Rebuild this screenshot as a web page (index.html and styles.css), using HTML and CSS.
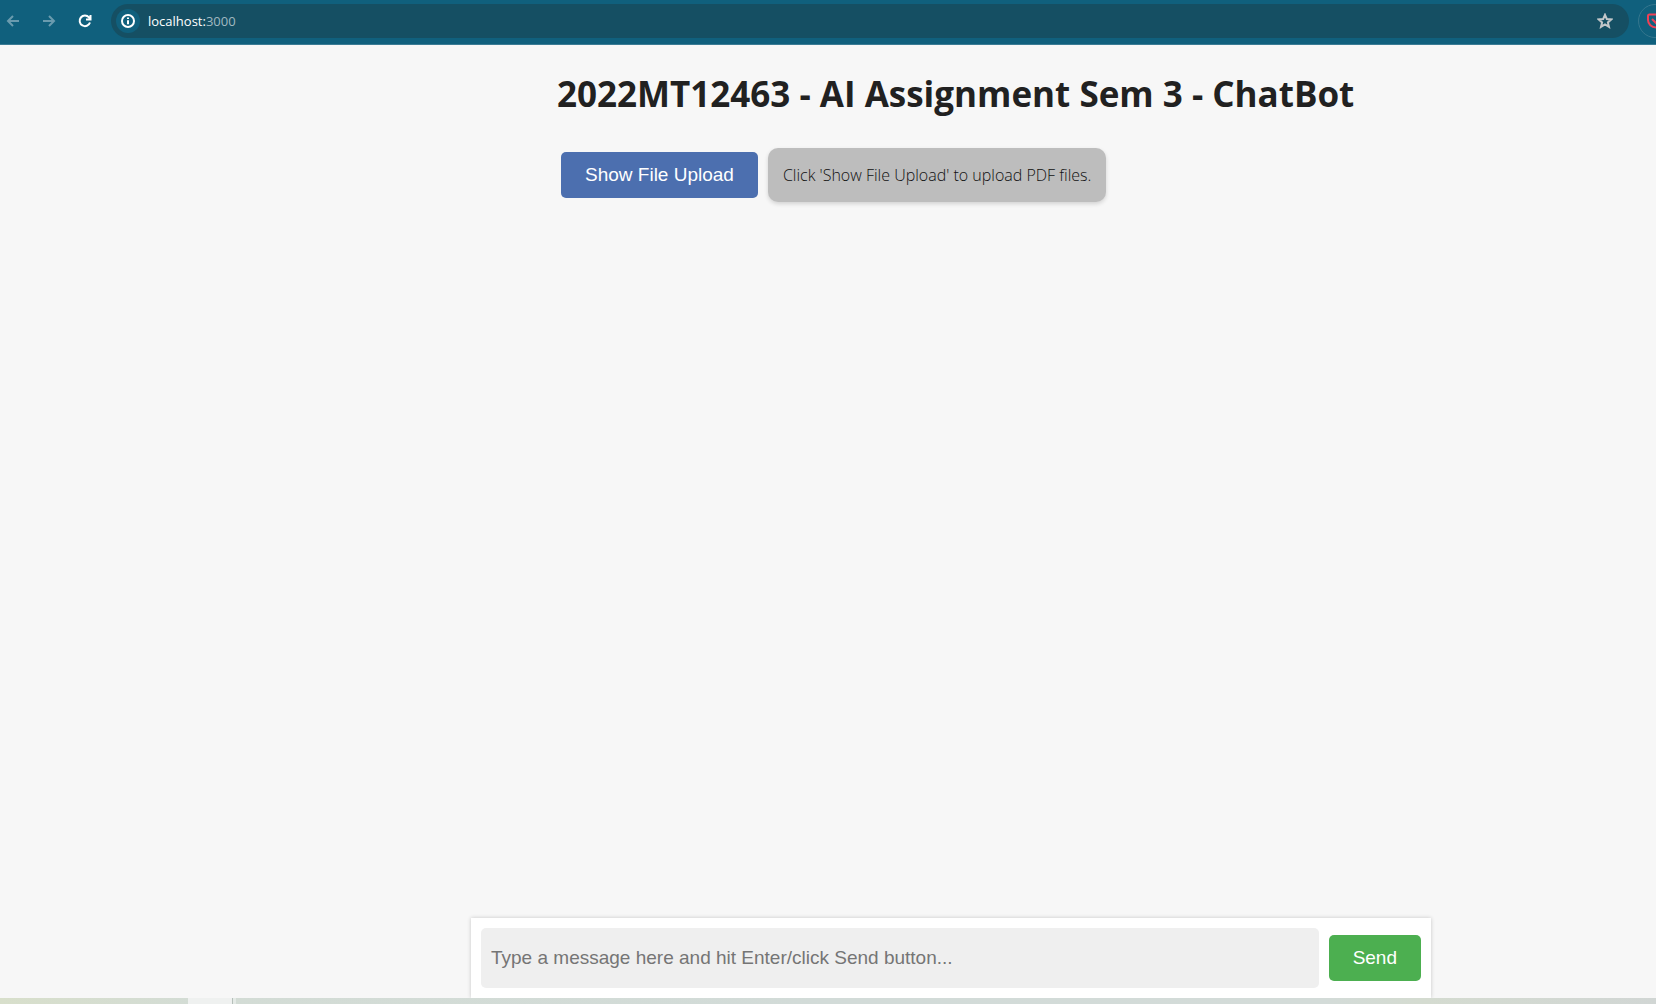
FILE: index.html
```html
<!DOCTYPE html>
<html lang="en">
<head>
<meta charset="utf-8">
<title>ChatBot</title>
<link rel="stylesheet" href="styles.css">
</head>
<body>
<header class="toolbar">
  <nav class="nav">
    <button class="nav-btn dim" aria-label="Back"><svg width="14" height="14" viewBox="0 0 14 14"><path d="M13 7H2M7 2L2 7l5 5"/></svg></button>
    <button class="nav-btn dim" aria-label="Forward"><svg width="14" height="14" viewBox="0 0 14 14"><path d="M1 7h11M7 2l5 5-5 5"/></svg></button>
    <button class="nav-btn reload" aria-label="Reload"><svg width="14" height="14" viewBox="0 0 14 14"><path d="M12 8.500A5.300 5.300 0 1 1 11 3.400L12.300 4.800M12.500 1v4.600H8"/></svg></button>
  </nav>
  <div class="address">
    <button class="site-info" aria-label="Site information"><svg width="14" height="14" viewBox="0 0 14 14"><circle cx="7" cy="7" r="6"/><path d="M7 6.200v4M7 3.500v1.600"/></svg></button>
    <div class="url">localhost:<span class="port">3000</span></div>
    <button class="star" aria-label="Bookmark"><svg width="16" height="16" viewBox="0 0 16 16"><path d="M8 1.800l1.800 4.200 4.600.4-3.500 3 1.100 4.500L8 11.500l-4 2.400 1.100-4.500-3.500-3 4.600-.4z"/></svg></button>
  </div>
  <button class="extension" aria-label="Save to Pocket"><svg width="18" height="16" viewBox="0 0 18 16"><path d="M2.500 1.500h13q1.500 0 1.500 1.500v4a8 7.500 0 0 1-16 0V3q0-1.500 1.500-1.500zM5 6l4 4 4-4"/></svg></button>
</header>
<div class="page">
  <main class="content">
    <h1 class="title">2022MT12463 - AI Assignment Sem 3 - ChatBot</h1>
    <div class="upload">
      <button class="btn btn-upload">Show File Upload</button>
      <p class="hint">Click 'Show File Upload' to upload PDF files.</p>
    </div>
  </main>
  <form class="composer">
    <input class="message" type="text" aria-label="Message" placeholder="Type a message here and hit Enter/click Send button...">
    <button class="btn btn-send" type="button">Send</button>
  </form>
</div>
<footer class="taskbar"><div class="task"></div><div class="divider"></div></footer>
</body>
</html>
```

FILE: styles.css
```css
* { box-sizing: border-box; }
body {
  margin: 0;
  min-height: 100vh;
  display: flex;
  flex-direction: column;
  overflow-x: hidden;
  background: #f7f7f7;
  color: #212121;
  font-family: "Open Sans", "Noto Sans", sans-serif;
}
button { border: 0; padding: 0; background: none; font: inherit; flex: none; }
svg { display: block; fill: none; stroke: currentColor; stroke-width: 2; }

.toolbar {
  display: flex;
  align-items: center;
  gap: 9px;
  height: 45px;
  padding: 0 0 3px 6px;
  background: #10607d;
  border-bottom: 1px solid #3b7c95;
  overflow: hidden;
}
.nav { display: flex; gap: 22px; width: 96px; flex: none; }
.nav-btn { color: #fff; }
.dim { color: #6a9bae; }
.dim svg { stroke-width: 2; }
.address {
  flex: 1;
  display: flex;
  align-items: center;
  gap: 8px;
  height: 34px;
  padding: 0 16px 0 5px;
  border-radius: 17px;
  background: #154f63;
  color: #fff;
}
.site-info {
  display: grid;
  place-items: center;
  width: 24px;
  height: 24px;
  border-radius: 50%;
  background: #10607d;
  color: #fff;
}
.site-info svg { stroke-width: 2; }
.url { flex: 1; font-size: 13px; line-height: 20px; }
.port { color: #a1b9c1; }
.star { color: #c3c7c9; }
.star svg { stroke-width: 2; }
.extension {
  display: flex;
  align-items: center;
  width: 34px;
  height: 34px;
  padding-left: 8px;
  margin-right: -16px;
  border: 1px solid #34768d;
  border-radius: 50%;
  color: #ef4056;
}

.page {
  flex: 1;
  display: grid;
  grid-template-columns: minmax(0, 471fr) minmax(0, 960fr) minmax(0, 225fr);
  grid-template-rows: 1fr auto;
}
.content { grid-column: 2; padding: 24px 86px; }
.title { margin: 0 0 30px; font-size: 35px; line-height: 49px; font-weight: 700; white-space: nowrap; }
.upload { display: flex; align-items: center; gap: 10px; padding-left: 4px; }
.btn {
  height: 46px;
  padding: 0 24px;
  border-radius: 5px;
  color: #fff;
  font-family: "Liberation Sans", Arial, sans-serif;
  font-size: 19px;
}
.btn-upload { background: #4c6faf; }
.btn-send { background: #4caf50; }
.hint {
  margin: 0;
  padding: 15px;
  border-radius: 10px;
  background: #bdbdbd;
  box-shadow: 0 2px 4px rgba(0, 0, 0, 0.15);
  color: #111;
  font-size: 16px;
  font-weight: 300;
  line-height: 24px;
}
.composer {
  grid-column: 2;
  display: flex;
  align-items: center;
  gap: 10px;
  padding: 10px;
  background: #fff;
  box-shadow: 0 0 4px rgba(0, 0, 0, 0.2);
}
.message {
  flex: 1;
  min-width: 0;
  height: 60px;
  padding: 0 10px;
  border: 0;
  border-radius: 5px;
  background: #efefef;
  font-family: "Liberation Sans", Arial, sans-serif;
  font-size: 19px;
}
.message::placeholder { color: #757575; }

.taskbar {
  position: relative;
  display: flex;
  height: 6px;
  padding-left: 188px;
  background: linear-gradient(90deg, #d8dfcb, #d3dcd5 12%, #d2dbd8 50%, #d3dbd8 80%, #d4dbd0 86%, #d1d6d4);
}
.task { width: 44px; background: #eff1f0; }
.divider { width: 4px; background: #e4eae6; border-left: 1px solid #b5bfba; }
```
